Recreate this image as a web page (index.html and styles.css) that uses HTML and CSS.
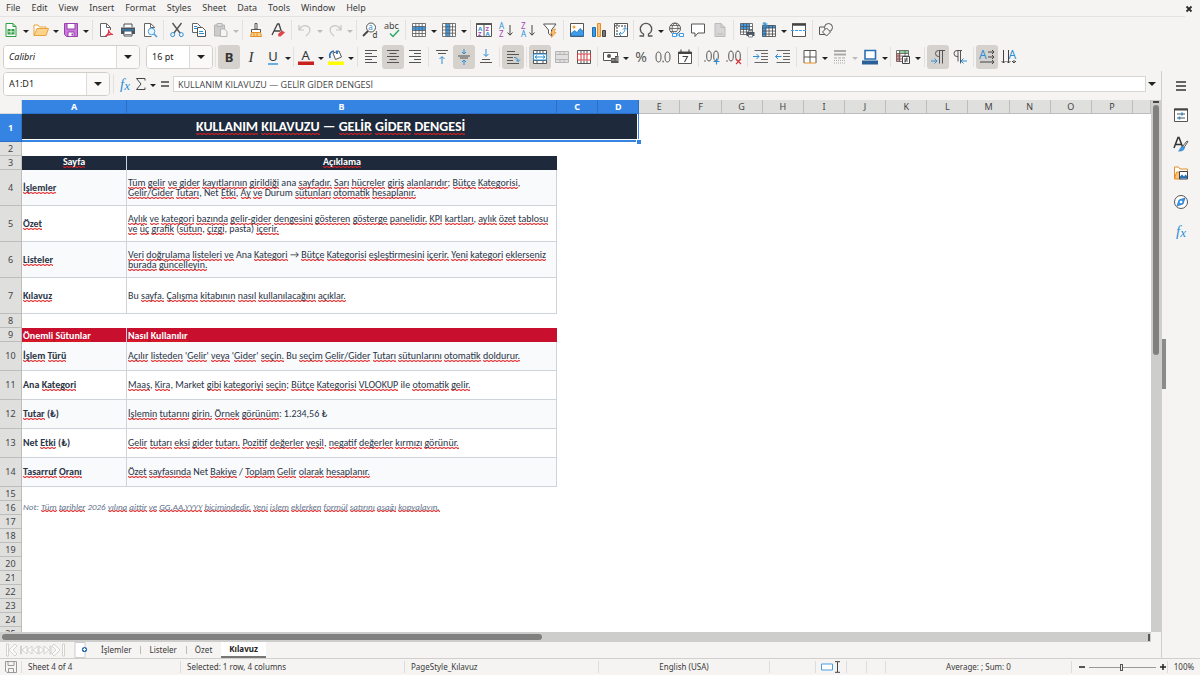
FILE: index.html
```html
<!DOCTYPE html>
<html lang="tr">
<head>
<meta charset="utf-8">
<title>Kılavuz</title>
<link rel="stylesheet" href="styles.css">
</head>
<body>
<div class="app">
<header class="menubar">
<nav class="menus">
<button>File</button><button>Edit</button><button>View</button><button>Insert</button><button>Format</button><button>Styles</button><button>Sheet</button><button>Data</button><button>Tools</button><button>Window</button><button>Help</button>
</nav>
<button class="close" aria-label="Close"><svg width="8" height="8" viewBox="0 0 8 8"><path d="M1.5 1.5l5 5M6.5 1.5l-5 5" stroke="#2b2b2b" stroke-width="1.8"/></svg></button>
</header>

<div class="toolbar standard">
<button class="tb" aria-label="New"><svg class="ic" viewBox="0 0 16 16"><path d="M3 1.5h7l3 3v10H3z" fill="#fff" stroke="#2f9e44"/><path d="M10 1.5v3h3" fill="none" stroke="#2f9e44"/><path d="M4.500 7h7v5.500h-7z" fill="#2f9e44"/><path d="M5 9.800h6M8 7v5" stroke="#fff" stroke-width=".8"/></svg></button><button class="dd" aria-label="New menu"></button>
<button class="tb" aria-label="Open"><svg class="ic" viewBox="0 0 16 16"><path d="M1 13.500V3h4l1.500 2h6.500v2" fill="#fff" stroke="#e8a33d"/><path d="M1 13.500L4 6.500h11.500l-2.500 7z" fill="#fbd38d" stroke="#e8a33d"/></svg></button><button class="dd" aria-label="Open menu"></button>
<button class="tb" aria-label="Save"><svg class="ic" viewBox="0 0 16 16"><path d="M1.500 1.500h13v13h-11l-2-2z" fill="#c77ad6" stroke="#9b3fb0"/><path d="M4 1.500h8v5.500H4zM5 10h6v4.500H5z" fill="#fff" stroke="#9b3fb0"/><path d="M8.500 11.500h1.500v2H8.500z" fill="#9b3fb0"/></svg></button><button class="dd" aria-label="Save menu"></button>
<i class="sep"></i>
<button class="tb" aria-label="Export as PDF"><svg class="ic" viewBox="0 0 16 16"><path d="M9 14.500H2.500v-13h6l4 4V8" fill="#fff" stroke="#666"/><path d="M8.500 1.500v4h4" fill="none" stroke="#666"/><path d="M7.500 14c3-1.500 3.500-4 3-6.500 .5 3 2 4.500 4.500 5-3-.5-5 0-7.500 1.500z" fill="none" stroke="#dc3545" stroke-width="1.200"/></svg></button>
<button class="tb" aria-label="Print"><svg class="ic" viewBox="0 0 16 16"><path d="M4 5V2h8v3" fill="#fff" stroke="#4a4f55"/><path d="M1 5.500h14v6.500H1z" fill="#4a5560"/><path d="M4 9h8v5H4z" fill="#fff" stroke="#4a4f55"/><path d="M2 8h12" stroke="#2a8fd6"/><path d="M5 12.500h6" stroke="#888"/></svg></button>
<button class="tb" aria-label="Print preview"><svg class="ic" viewBox="0 0 16 16"><path d="M12.500 6V5l-4-3.500h-6v13h7" fill="#fff" stroke="#666"/><path d="M8.500 1.500v4h4" fill="none" stroke="#666"/><circle cx="9.500" cy="9.500" r="3.300" fill="#e8f4fd" stroke="#4a9fe0"/><path d="M12 12l3 3" stroke="#4a9fe0" stroke-width="1.600"/></svg></button>
<i class="sep"></i>
<button class="tb" aria-label="Cut"><svg class="ic" viewBox="0 0 16 16"><path d="M3.500 1l7.500 10M12.500 1L5 11" stroke="#555" stroke-width="1.400"/><circle cx="3.700" cy="12.600" r="2" fill="none" stroke="#2a8fd6"/><circle cx="12.300" cy="12.600" r="2" fill="none" stroke="#2a8fd6"/></svg></button>
<button class="tb" aria-label="Copy"><svg class="ic" viewBox="0 0 16 16"><path d="M1.500 1.500h5l3 3v6h-8z" fill="#fff" stroke="#666"/><path d="M6.500 5.500h5l3 3v6h-8z" fill="#fff" stroke="#555"/><path d="M3 4.500h3M3 6.500h3M8 9.500h4M8 11.500h5" stroke="#2a8fd6"/></svg></button>
<button class="tb" aria-label="Paste" disabled><svg class="ic" viewBox="0 0 16 16"><path d="M1.500 3h10v11h-10z" fill="#ccc" stroke="#b5b5b5"/><path d="M4 1.500h5v3H4z" fill="#ddd" stroke="#b5b5b5"/><path d="M7.500 7h4l2.500 2.500v5H7.500z" fill="#f4f4f4" stroke="#b5b5b5"/></svg></button><button class="dd" aria-label="Paste menu" disabled></button>
<i class="sep"></i>
<button class="tb" aria-label="Clone formatting"><svg class="ic" viewBox="0 0 16 16"><path d="M7 1.500h2V7H7zM3.500 7.500h9v3h-9z" fill="#fff" stroke="#555"/><path d="M3.500 10.500h9l1 4h-11z" fill="#fbd38d" stroke="#e58e26"/><path d="M6 11v3M9 11v3" stroke="#e58e26"/></svg></button>
<button class="tb" aria-label="Clear formatting"><svg class="ic" viewBox="0 0 16 16"><path d="M2 13L7.500 2H9l2.500 8M4 9h6" fill="none" stroke="#444" stroke-width="1.300"/><path d="M8 12l4-3.500 3 2-4.500 4H8.500z" fill="#e0474c"/></svg></button>
<i class="sep"></i>
<button class="tb" aria-label="Undo" disabled><svg class="ic" viewBox="0 0 16 16"><path d="M2 3v5h5M2 8c2-4 6-5.500 9-3.500s3 5.500-2 9.500" fill="none" stroke="#c4c4c4" stroke-width="1.200"/></svg></button><button class="dd" aria-label="Undo menu" disabled></button>
<button class="tb" aria-label="Redo" disabled><svg class="ic" viewBox="0 0 16 16"><path d="M14 3v5H9M14 8c-2-4-6-5.500-9-3.500S2 10 7 14" fill="none" stroke="#c4c4c4" stroke-width="1.200"/></svg></button><button class="dd" aria-label="Redo menu" disabled></button>
<i class="sep"></i>
<button class="tb" aria-label="Find and replace"><svg class="ic" viewBox="0 0 16 16"><circle cx="9" cy="5.500" r="4.500" fill="#fff" stroke="#555"/><path d="M6 9l-5 5" stroke="#444" stroke-width="1.800"/><text x="6.300" y="8" font-size="8" fill="#2a8fd6">a</text><text x="10.500" y="15.500" font-size="8" fill="#333">d</text></svg></button>
<button class="tb" aria-label="Spelling"><svg class="ic" viewBox="0 0 16 16"><text x="0" y="7" font-size="9" fill="#444">abc</text><path d="M6 11.500l3 3 6-6.500" fill="none" stroke="#2fa866" stroke-width="1.500"/></svg></button>
<i class="sep"></i>
<button class="tb" aria-label="Row"><svg class="ic" viewBox="0 0 16 16"><path d="M1.500 1.500h13v13h-13z" fill="#fff"/><path d="M1.500 4.500h13v4h-13z" fill="#3d9be9"/><path d="M1.500 1.500h13v13h-13zM1.500 4.500h13M1.500 8.500h13M1.500 11.500h13M4.800 1.500v13M8 1.500v13M11.200 1.500v13" fill="none" stroke="#555" stroke-width=".8"/></svg></button><button class="dd" aria-label="Row menu"></button>
<button class="tb" aria-label="Column"><svg class="ic" viewBox="0 0 16 16"><path d="M1.500 1.500h13v13h-13z" fill="#fff"/><path d="M4.800 1.500h4v13h-4z" fill="#3d9be9"/><path d="M1.500 1.500h13v13h-13zM4.800 1.500v13M8.800 1.500v13M11.500 1.500v13M1.500 4.800h13M1.500 8h13M1.500 11.200h13" fill="none" stroke="#555" stroke-width=".8"/></svg></button><button class="dd" aria-label="Column menu"></button>
<i class="sep"></i>
<button class="tb" aria-label="Sort"><svg class="ic" viewBox="0 0 16 16"><path d="M.5 1.500h15v13H.5zM8 3v11" fill="#fff" stroke="#555"/><path d="M.5 2h15" stroke="#555" stroke-width="2"/><g font-size="6" font-weight="700"><text x="2" y="8.500" fill="#2a8fd6">A</text><text x="2" y="14" fill="#a347ba">Z</text><text x="9.500" y="8.500" fill="#a347ba">Z</text><text x="9.500" y="14" fill="#2a8fd6">A</text></g></svg></button>
<button class="tb" aria-label="Sort ascending"><svg class="ic" viewBox="0 0 16 16"><g font-size="8"><text x="1" y="6.500" fill="#2a8fd6">A</text><text x="1" y="15" fill="#a347ba">Z</text></g><path d="M12 3v10M9.500 10.500L12 13.200l2.500-2.700" fill="none" stroke="#444"/></svg></button>
<button class="tb" aria-label="Sort descending"><svg class="ic" viewBox="0 0 16 16"><g font-size="8"><text x="1" y="6.500" fill="#a347ba">Z</text><text x="1" y="15" fill="#2a8fd6">A</text></g><path d="M12 3v10M9.500 10.500L12 13.200l2.500-2.700" fill="none" stroke="#444"/></svg></button>
<button class="tb" aria-label="AutoFilter"><svg class="ic" viewBox="0 0 16 16"><path d="M1.500 2h12.500L9.500 8v6L6.500 11.500V8z" fill="#fff" stroke="#555"/><path d="M11.500 7L8.500 11.500h2l-1 4L14 10.500h-2L13.500 7z" fill="#fbc27a" stroke="#e58e26" stroke-width=".7"/></svg></button>
<i class="sep"></i>
<button class="tb" aria-label="Insert image"><svg class="ic" viewBox="0 0 16 16"><path d="M1.500 1.500h13v13h-13z" fill="#fff" stroke="#555"/><path d="M2 14v-2.500l3.500-3 2.500 2 3-4 3.500 3V14z" fill="#3d9be9" stroke="#1c6fb5" stroke-width=".7"/><circle cx="5" cy="5" r="1.500" fill="#f3a53c"/></svg></button>
<button class="tb" aria-label="Insert chart"><svg class="ic" viewBox="0 0 16 16"><path d="M1.500 5.500h3v9h-3z" fill="#3d9be9" stroke="#1c6fb5"/><path d="M6.500 1.500h3v13h-3z" fill="#fbc27a" stroke="#e58e26"/><path d="M11.500 8.500h3v6h-3z" fill="#777" stroke="#444"/></svg></button>
<button class="tb" aria-label="Pivot table"><svg class="ic" viewBox="0 0 16 16"><path d="M1.500 1.500h13v13h-13z" fill="#fff" stroke="#555"/><path d="M4 2v12M2 4h12" stroke="#777" stroke-width="1.500" stroke-dasharray="2 1"/><path d="M6 12c4 0 6-2 6-6M10 7.500L12 5.500l2 2M8 10l-2 2 2 2" fill="none" stroke="#2a8fd6"/></svg></button>
<i class="sep tight"></i>
<button class="tb" aria-label="Special character"><svg class="ic" viewBox="0 0 16 16"><path d="M1.500 14h4v-2C3.500 11 2.300 9 2.300 7a5.700 5.700 0 0 1 11.400 0c0 2-1.200 4-3.200 5v2h4" fill="none" stroke="#555" stroke-width="1.300"/></svg></button><button class="dd" aria-label="Special character menu"></button>
<button class="tb" aria-label="Hyperlink"><svg class="ic" viewBox="0 0 16 16"><circle cx="7" cy="6.500" r="5.500" fill="none" stroke="#555"/><path d="M1.500 6.500h11M2.500 3.500h9M2.500 9.500h6M7 1c-4 3-4 8 0 11M7 1c4 3 4 8 0 9" fill="none" stroke="#555" stroke-width=".8"/><path d="M4.500 11.500h4v3h-4zM11.500 11.500h4v3h-4zM8 13h4" fill="#fff" stroke="#3d9be9"/></svg></button>
<button class="tb" aria-label="Comment"><svg class="ic" viewBox="0 0 16 16"><path d="M1.500 2h13v9H8l-3 3.500V11H1.500z" fill="#fff" stroke="#555"/></svg></button>
<button class="tb" aria-label="Headers and footers" disabled><svg class="ic" viewBox="0 0 16 16"><path d="M3 1.500h6l4 4v9H3z" fill="#d6d6d6" stroke="#bbb"/><path d="M9 1.500v4h4M5 12h6" fill="none" stroke="#bbb"/></svg></button>
<i class="sep"></i>
<button class="tb" aria-label="Print area"><svg class="ic" viewBox="0 0 16 16"><path d="M1.500 1.500h12v11h-12z" fill="#fff"/><path d="M1.500 1.500h9v6h-9z" fill="#3d9be9"/><path d="M1.500 1.500h12v11h-12zM1.500 4.500h12M1.500 7.500h12M1.500 10h12M4.500 1.500v11M7.500 1.500v11M10.500 1.500v11" fill="none" stroke="#555" stroke-width=".8"/><path d="M7.500 10h8v4h-8z" fill="#4a5560"/><path d="M9.500 8.500h4v1.500h-4zM9.500 12.500h4v2.500h-4z" fill="#fff" stroke="#4a5560" stroke-width=".7"/></svg></button>
<button class="tb" aria-label="Freeze"><svg class="ic" viewBox="0 0 16 16"><path d="M1.500 3.500h13v11h-13z" fill="#fff"/><path d="M1.500 3.500h13v2.500h-13zM1.500 3.500h3.500v11H1.500z" fill="#3d9be9"/><path d="M1.500 3.500h13v11h-13zM1.500 6h13M1.500 9h13M1.500 12h13M5 3.500v11M8 3.500v11M11.500 3.500v11" fill="none" stroke="#444" stroke-width=".8"/><path d="M4 0v6M1.500 2h5M2 .500l4 3.500" stroke="#2a8fd6"/></svg></button><button class="dd" aria-label="Freeze menu"></button>
<button class="tb" aria-label="Split window"><svg class="ic" viewBox="0 0 16 16"><path d="M1.500 2h13v12.500h-13z" fill="#fff" stroke="#555"/><path d="M1 2.500h14" stroke="#444" stroke-width="2.500"/><path d="M0 8.500h16" stroke="#3d9be9" stroke-dasharray="3 1"/></svg></button>
<i class="sep"></i>
<button class="tb" aria-label="Draw functions"><svg class="ic" viewBox="0 0 16 16"><path d="M1.500 5h8v7.500h-8z" fill="#f5f4f2" stroke="#555"/><circle cx="10.500" cy="5.500" r="4" fill="#f5f4f2" stroke="#555"/><path d="M8.500 6l4 4-4 4-4-4z" fill="#f5f4f2" stroke="#555"/></svg></button>
</div>

<div class="toolbar formatting">
<div class="combo font"><select aria-label="Font name"><option>Calibri</option></select><span class="drop"></span></div>
<div class="combo size"><select aria-label="Font size"><option>16 pt</option></select><span class="drop"></span></div>
<i class="sep"></i>
<button class="tb on" aria-label="Bold"><b class="glyph">B</b></button>
<button class="tb" aria-label="Italic"><em class="glyph serif">I</em></button>
<button class="tb" aria-label="Underline"><span class="glyph under">U</span></button><button class="dd" aria-label="Underline menu"></button>
<i class="sep tight"></i>
<button class="tb" aria-label="Font color"><svg class="ic" viewBox="0 0 16 16"><text x="3.500" y="11" font-size="13" fill="#333">A</text><path d="M0 12.500h16v3.500H0z" fill="#c9211e"/></svg></button><button class="dd" aria-label="Font color menu"></button>
<button class="tb" aria-label="Highlighting"><svg class="ic" viewBox="0 0 16 16"><path d="M5 4l6-2 2.500 6-6 2.500z" fill="#fff" stroke="#555"/><path d="M9 5V1.500M2 9c-1-4 0-6 4-7" fill="none" stroke="#2a6fb5" stroke-width="1.800"/><path d="M0 12.500h16v3.500H0z" fill="#ff0"/></svg></button><button class="dd" aria-label="Highlighting menu"></button>
<i class="sep"></i>
<button class="tb" aria-label="Align left"><svg class="ic" viewBox="0 0 16 16"><path d="M2 1.500h12M2 4.500h7M2 7.500h12M2 10.500h7M2 13.500h12" stroke="#555"/></svg></button>
<button class="tb on" aria-label="Align center"><svg class="ic" viewBox="0 0 16 16"><path d="M2 1.500h12M4.500 4.500h7M2 7.500h12M4.500 10.500h7M2 13.500h12" stroke="#555"/></svg></button>
<button class="tb" aria-label="Align right"><svg class="ic" viewBox="0 0 16 16"><path d="M2 1.500h12M7 4.500h7M2 7.500h12M7 10.500h7M2 13.500h12" stroke="#555"/></svg></button>
<i class="sep"></i>
<button class="tb" aria-label="Align top"><svg class="ic" viewBox="0 0 16 16"><path d="M2 1.500h12M4 4.500h8" stroke="#555"/><path d="M8 15V8M5.500 10L8 7.500l2.500 2.500" fill="none" stroke="#2a8fd6"/></svg></button>
<button class="tb on" aria-label="Center vertically"><svg class="ic" viewBox="0 0 16 16"><path d="M2 7h12M4 9h8" stroke="#555"/><path d="M8 0v5M6 3l2 2 2-2M8 16v-5M6 13l2-2 2 2" fill="none" stroke="#2a8fd6"/></svg></button>
<button class="tb" aria-label="Align bottom"><svg class="ic" viewBox="0 0 16 16"><path d="M4 10.500h8M2 13.500h12" stroke="#555"/><path d="M8 0v7M5.500 5L8 7.500 10.500 5" fill="none" stroke="#2a8fd6"/></svg></button>
<i class="sep"></i>
<button class="tb on" aria-label="Wrap text"><svg class="ic" viewBox="0 0 16 16"><path d="M2 2.500h8M2 5.500h12M2 8.500h6M2 11.500h6M2 14.500h12" stroke="#555"/><path d="M9 8.500c3 0 4 1 4 4M11 10.500l2 2 2-2" fill="none" stroke="#2a8fd6"/></svg></button>
<i class="sep"></i>
<button class="tb on" aria-label="Merge and center"><svg class="ic" viewBox="0 0 16 16"><path d="M1.500 1.500h13v13h-13zM1.500 4.500h13M1.500 11.500h13M5 1.500v3M11 1.500v3M8 1.500v3M5 11.500v3M11 11.500v3" fill="#fff" stroke="#555"/><path d="M1.500 5h13v6h-13z" fill="#fff" stroke="#2a8fd6"/><path d="M3 8h10M5 6.500L3 8l2 1.500M11 6.500L13 8l-2 1.500" fill="none" stroke="#2a8fd6"/></svg></button>
<button class="tb" aria-label="Merge cells" disabled><svg class="ic" viewBox="0 0 16 16"><path d="M1.500 2.500h13v11h-13zM1.500 5.500h13M1.500 10.500h13M6 2.500v3M10 2.500v3M6 10.500v3M10 10.500v3" fill="#e0e0e0" stroke="#b5b5b5"/></svg></button>
<button class="tb" aria-label="Unmerge cells"><svg class="ic" viewBox="0 0 16 16"><path d="M1.500 1.500h13v13h-13zM5 1.500v3M8 1.500v3M11 1.500v3M5 11.500v3M8 11.500v3M11 11.500v3" fill="#fff" stroke="#555"/><path d="M1.500 5h13v6h-13zM5 5v6M8 5v6M11 5v6" fill="#fff" stroke="#d83a3f"/></svg></button>
<i class="sep"></i>
<button class="tb" aria-label="Currency"><svg class="ic" viewBox="0 0 16 16"><path d="M.5 3.500h14v8H.5z" fill="#fff" stroke="#555"/><circle cx="6" cy="7" r="2" fill="#555"/><path d="M8 9h4v5H8zM12 7h3.500v7H12z" fill="#555"/><path d="M8.500 11h3M12.500 9h3M12.500 11h3" stroke="#eee" stroke-width=".7"/></svg></button><button class="dd" aria-label="Currency menu"></button>
<button class="tb" aria-label="Percent"><span class="glyph light">%</span></button>
<button class="tb" aria-label="Number"><svg class="ic" viewBox="0 0 16 16"><path d="M7.500 12.500h1.200" stroke="#444" stroke-width="1.300"/><ellipse cx="3.500" cy="8" rx="2.500" ry="5" fill="none" stroke="#555"/><ellipse cx="12.500" cy="8" rx="2.500" ry="5" fill="none" stroke="#555"/></svg></button>
<button class="tb" aria-label="Date"><svg class="ic" viewBox="0 0 16 16"><path d="M1.500 3h13v11.500h-13z" fill="#fff" stroke="#555"/><path d="M1 4h14" stroke="#444" stroke-width="2"/><path d="M4 .5v3M12 .5v3M5.500 7.500h5L7.500 13" fill="none" stroke="#444" stroke-width="1.100"/></svg></button>
<i class="sep"></i>
<button class="tb" aria-label="Add decimal place"><svg class="ic" viewBox="0 0 16 16"><path d="M.5 12h1" stroke="#444" stroke-width="1.500"/><ellipse cx="5" cy="7" rx="2.300" ry="5" fill="none" stroke="#555"/><ellipse cx="12" cy="7" rx="2.300" ry="5" fill="none" stroke="#555"/><path d="M9.500 12.500h6M12.500 9.500v6" stroke="#2a8fd6" stroke-width="1.200"/></svg></button>
<button class="tb" aria-label="Delete decimal place"><svg class="ic" viewBox="0 0 16 16"><path d="M.5 12h1" stroke="#444" stroke-width="1.500"/><ellipse cx="5" cy="7" rx="2.300" ry="5" fill="none" stroke="#555"/><ellipse cx="12" cy="7" rx="2.300" ry="5" fill="none" stroke="#555"/><path d="M10 10l5 5M15 10l-5 5" stroke="#d83a3f" stroke-width="1.200"/></svg></button>
<i class="sep"></i>
<button class="tb" aria-label="Increase indent"><svg class="ic" viewBox="0 0 16 16"><path d="M1.500 1.500H15M8 4.500h7M8 7.500h7M8 10.500h7M1.500 13.500H15" stroke="#666"/><path d="M0 7.500h6M3.500 5L6 7.500 3.500 10" fill="none" stroke="#2a8fd6"/></svg></button>
<button class="tb" aria-label="Decrease indent"><svg class="ic" viewBox="0 0 16 16"><path d="M1.500 1.500H15M8 4.500h7M8 7.500h7M8 10.500h7M1.500 13.500H15" stroke="#666"/><path d="M.5 7.500h6M3 5L.5 7.500 3 10" fill="none" stroke="#2a8fd6"/></svg></button>
<i class="sep"></i>
<button class="tb" aria-label="Borders"><svg class="ic" viewBox="0 0 16 16"><path d="M2 14V1.500h12V14M8 2v12M2 8h12" fill="#fff" stroke="#555"/><path d="M2 14h12" stroke="#e58e26"/></svg></button><button class="dd" aria-label="Borders menu"></button>
<button class="tb" aria-label="Border style" disabled><svg class="ic" viewBox="0 0 16 16"><path d="M2 2h12M2 5.500h12" stroke="#aaa" stroke-width="2"/><path d="M2 9h12" stroke="#aaa" stroke-dasharray="3 1"/><path d="M2 11.500h12M2 14h12" stroke="#aaa" stroke-dasharray="1 1"/></svg></button><button class="dd" aria-label="Border style menu" disabled></button>
<button class="tb" aria-label="Border color"><svg class="ic" viewBox="0 0 16 16"><path d="M3 1.500h10.500V10H3z" fill="#fff" stroke="#2a6fb5" stroke-width="1.600"/><path d="M0 11.500h16v4H0z" fill="#2a6099"/></svg></button><button class="dd" aria-label="Border color menu"></button>
<i class="sep tight"></i>
<button class="tb" aria-label="Conditional formatting"><svg class="ic" viewBox="0 0 16 16"><path d="M1.500 1.500h12v11h-12z" fill="#fff"/><path d="M4.500 1.500h9v3h-9z" fill="#8fd19e"/><path d="M1.500 4.500h4v8h-4z" fill="#ef8b8b"/><path d="M1.500 1.500h12v11h-12zM1.500 4.500h12M1.500 7h12M1.500 10h12M4.500 1.500v11M10 1.500v6" fill="none" stroke="#555" stroke-width=".8"/><path d="M7.500 7.500h7v7h-7z" fill="#fff" stroke="#444"/><path d="M9 10h4M9 12h4M12 8.500l-2 5" stroke="#333" stroke-width=".8"/></svg></button><button class="dd" aria-label="Conditional formatting menu"></button>
<i class="sep"></i>
<button class="tb on" aria-label="Left to right"><svg class="ic" viewBox="0 0 16 16"><path d="M15 1.500H8.500a3 3 0 0 0 0 6H9M9.500 1.500v13M12.500 1.500v13" fill="none" stroke="#555"/><path d="M1 12h6M4.500 9.500L7 12l-2.500 2.500" fill="none" stroke="#2a8fd6"/></svg></button>
<button class="tb" aria-label="Right to left"><svg class="ic" viewBox="0 0 16 16"><path d="M10 1.500H5a3 3 0 0 0 0 6h1M6 1.500v11M8.500 1.500v13" fill="none" stroke="#555"/><path d="M15 12H9M11.500 9.500L9 12l2.500 2.500" fill="none" stroke="#2a8fd6"/></svg></button>
<i class="sep"></i>
<button class="tb on" aria-label="Text direction horizontal"><svg class="ic" viewBox="0 0 16 16"><text x="0" y="9.500" font-size="12" fill="#2a8fd6">A</text><path d="M9 3h6M13 1l2 2-2 2M9 8h6M13 6l2 2-2 2M1 13h14M13 11l2 2-2 2" fill="none" stroke="#444"/></svg></button>
<button class="tb" aria-label="Text direction vertical"><svg class="ic" viewBox="0 0 16 16"><text x="7.500" y="9.500" font-size="12" fill="#2a8fd6">A</text><path d="M2.500 1v13M.5 12l2 2 2-2M7.500 1v13M5.500 12l2 2 2-2M13 11v3M11 12l2 2 2-2" fill="none" stroke="#444"/></svg></button>
</div>

<div class="workspace">
<main class="doc">
<div class="formulabar">
<div class="combo name"><input aria-label="Name box" value="A1:D1"><span class="drop"></span></div>
<i class="sep"></i>
<button class="fb fx" aria-label="Function wizard">f<small>x</small></button>
<button class="fb" aria-label="Sum"><svg width="12" height="14" viewBox="0 0 12 14"><path d="M10 3.500V1.500H1.500L6 7l-4.500 5.500H10v-2" fill="none" stroke="#444"/></svg></button><button class="dd" aria-label="Sum menu"></button>
<button class="fb" aria-label="Formula"><svg width="10" height="8" viewBox="0 0 10 8"><path d="M1 2h8M1 6h8" stroke="#444" stroke-width="1.600"/></svg></button>
<input class="formula" aria-label="Formula" value="KULLANIM KILAVUZU — GELİR GİDER DENGESİ">
<button class="expand" aria-label="Expand formula bar"></button>
</div>
<div class="gridwrap">
<div class="gridview">
<table>
<colgroup><col class="c-num"><col class="c-a"><col class="c-b"><col span="14"><col class="c-q"></colgroup>
<thead><tr><th class="corner"></th><th class="sel">A</th><th class="sel">B</th><th class="sel">C</th><th class="sel">D</th><th>E</th><th>F</th><th>G</th><th>H</th><th>I</th><th>J</th><th>K</th><th>L</th><th>M</th><th>N</th><th>O</th><th>P</th><th></th></tr></thead>
<tbody>
<tr class="r-title"><th class="sel">1</th><td class="title" colspan="4"><u>KULLANIM</u> <u>KILAVUZU</u> — <u>GELİR</u> <u>GİDER</u> <u>DENGESİ</u><span class="handle"></span></td><td colspan="13"></td></tr>
<tr><th>2</th><td colspan="17"></td></tr>
<tr class="navy"><th>3</th><td><u>Sayfa</u></td><td><u>Açıklama</u></td><td colspan="15"></td></tr>
<tr class="tall tint"><th>4</th><td><u>İşlemler</u></td><td><u>Tüm</u> <u>gelir</u> <u>ve</u> <u>gider</u> <u>kayıtlarının</u> <u>girildiği</u> ana <u>sayfadır.</u> <u>Sarı</u> <u>hücreler</u> <u>giriş</u> <u>alanlarıdır</u>; <u>Bütçe</u> <u>Kategorisi</u>,<br><u>Gelir/Gider</u> <u>Tutarı</u>, Net <u>Etki</u>, <u>Ay</u> <u>ve</u> Durum <u>sütunları</u> <u>otomatik</u> <u>hesaplanır.</u></td><td colspan="15"></td></tr>
<tr class="tall"><th>5</th><td><u>Özet</u></td><td><u>Aylık</u> <u>ve</u> <u>kategori</u> <u>bazında</u> <u>gelir-gider</u> <u>dengesini</u> <u>gösteren</u> <u>gösterge</u> <u>panelidir.</u> <u>KPI</u> <u>kartları</u>, <u>aylık</u> <u>özet</u> <u>tablosu</u><br><u>ve</u> <u>üç</u> <u>grafik</u> (<u>sütun</u>, <u>çizgi</u>, pasta) <u>içerir.</u></td><td colspan="15"></td></tr>
<tr class="tall tint"><th>6</th><td><u>Listeler</u></td><td><u>Veri</u> <u>doğrulama</u> <u>listeleri</u> <u>ve</u> Ana <u>Kategori</u> → <u>Bütçe</u> <u>Kategorisi</u> <u>eşleştirmesini</u> <u>içerir.</u> <u>Yeni</u> <u>kategori</u> <u>eklerseniz</u><br><u>burada</u> <u>güncelleyin.</u></td><td colspan="15"></td></tr>
<tr class="tall"><th>7</th><td><u>Kılavuz</u></td><td>Bu <u>sayfa.</u> <u>Çalışma</u> <u>kitabının</u> <u>nasıl</u> <u>kullanılacağını</u> <u>açıklar.</u></td><td colspan="15"></td></tr>
<tr><th>8</th><td colspan="17"></td></tr>
<tr class="red"><th>9</th><td><u>Önemli</u> <u>Sütunlar</u></td><td><u>Nasıl</u> <u>Kullanılır</u></td><td colspan="15"></td></tr>
<tr class="mid tint"><th>10</th><td><u>İşlem</u> <u>Türü</u></td><td><u>Açılır</u> <u>listeden</u> '<u>Gelir</u>' <u>veya</u> '<u>Gider</u>' <u>seçin.</u> Bu <u>seçim</u> <u>Gelir/Gider</u> <u>Tutarı</u> <u>sütunlarını</u> <u>otomatik</u> <u>doldurur.</u></td><td colspan="15"></td></tr>
<tr class="mid"><th>11</th><td>Ana <u>Kategori</u></td><td><u>Maaş</u>, <u>Kira</u>, Market <u>gibi</u> <u>kategoriyi</u> <u>seçin</u>; <u>Bütçe</u> <u>Kategorisi</u> <u>VLOOKUP</u> ile <u>otomatik</u> <u>gelir.</u></td><td colspan="15"></td></tr>
<tr class="mid tint"><th>12</th><td><u>Tutar</u> (₺)</td><td><u>İşlemin</u> <u>tutarını</u> <u>girin.</u> <u>Örnek</u> <u>görünüm</u>: 1.234,56 ₺</td><td colspan="15"></td></tr>
<tr class="mid"><th>13</th><td>Net <u>Etki</u> (₺)</td><td><u>Gelir</u> <u>tutarı</u> <u>eksi</u> <u>gider</u> <u>tutarı.</u> <u>Pozitif</u> <u>değerler</u> <u>yeşil</u>, <u>negatif</u> <u>değerler</u> <u>kırmızı</u> <u>görünür.</u></td><td colspan="15"></td></tr>
<tr class="mid tint"><th>14</th><td><u>Tasarruf</u> <u>Oranı</u></td><td><u>Özet</u> <u>sayfasında</u> Net <u>Bakiye</u> / <u>Toplam</u> <u>Gelir</u> <u>olarak</u> <u>hesaplanır.</u></td><td colspan="15"></td></tr>
<tr><th>15</th><td colspan="17"></td></tr>
<tr><th>16</th><td class="note" colspan="17">Not: <u>Tüm</u> <u>tarihler</u> 2026 <u>yılına</u> <u>aittir</u> <u>ve</u> <u>GG.AA.YYYY</u> <u>biçimindedir.</u> <u>Yeni</u> <u>işlem</u> <u>eklerken</u> <u>formül</u> <u>satırını</u> <u>aşağı</u> <u>kopyalayın.</u></td></tr>
<tr><th>17</th><td colspan="17"></td></tr>
<tr><th>18</th><td colspan="17"></td></tr>
<tr><th>19</th><td colspan="17"></td></tr>
<tr><th>20</th><td colspan="17"></td></tr>
<tr><th>21</th><td colspan="17"></td></tr>
<tr><th>22</th><td colspan="17"></td></tr>
<tr><th>23</th><td colspan="17"></td></tr>
<tr><th>24</th><td colspan="17"></td></tr>
<tr><th>25</th><td colspan="17"></td></tr>
</tbody>
</table>
</div>
<div class="vscroll"><span class="splitter"></span><span class="thumb"></span></div>
</div>
<div class="hscroll"><span class="thumb"></span><span class="splitter"></span></div>
<div class="tabs">
<div class="tabnav" aria-hidden="true"><svg width="62" height="14" viewBox="0 0 62 14"><g fill="#fbfbfa" stroke="#c9c9c7" stroke-width=".8"><path d="M1.500 1v12h2V1zM4 7l6-6 2 2-4 4 4 4-2 2zM15.500 3v8h1V3zM17 7l5-4v8zM22 7l5-4v8zM28 7l5-4v8zM34 3l5 4-5 4zM39 3l5 4-5 4zM45 3v8h1V3zM47 3l2-2 6 6-6 6-2-2 4-4zM57.500 1v12h2V1z"/></g></svg></div>
<button class="addtab" aria-label="Add sheet"><svg width="16" height="16" viewBox="0 0 16 16"><path d="M-1 .500h10v15H-1z" fill="#fff" stroke="#ccc"/><circle cx="8.500" cy="7.500" r="2.600" fill="#2a6fb5"/><path d="M7 7.500h3M8.500 6v3" stroke="#fff"/></svg></button>
<button class="tab">İşlemler</button><button class="tab">Listeler</button><button class="tab">Özet</button><button class="tab active">Kılavuz</button>
</div>
</main>
<aside class="sidebar">
<span class="grip"></span>
<button aria-label="Sidebar settings"><svg class="ic" viewBox="0 0 16 16"><path d="M3 4h10M3 8h10M3 12h10" stroke="#333" stroke-width="1.500"/></svg></button>
<button aria-label="Properties"><svg class="ic" viewBox="0 0 16 16"><path d="M1.500 2h13v12.500h-13z" fill="#fff" stroke="#555"/><path d="M1 2.500h14" stroke="#444" stroke-width="2"/><path d="M4 7h8M4 11h8" stroke="#555"/><path d="M9 5.500v3M6.500 9.500v3" stroke="#2a8fd6" stroke-width="1.600"/></svg></button>
<button aria-label="Styles"><svg class="ic" viewBox="0 0 16 16"><path d="M1 12L5 1.500h1L10 12M2.500 8.500h6" fill="none" stroke="#333" stroke-width="1.500"/><path d="M15 5.500l-4 6-1.500-1L14 5z" fill="#fff" stroke="#555"/><path d="M9.500 10.500l2 1c0 2-2 4-6 3.500 2-1 1.500-4 4-4.500z" fill="#3d9be9" stroke="#1c6fb5" stroke-width=".6"/></svg></button>
<button aria-label="Gallery"><svg class="ic" viewBox="0 0 16 16"><path d="M1.500 14V2h4L7 4h7.500v3" fill="#fff" stroke="#e58e26"/><path d="M1.500 14L3.500 7H8v7z" fill="#fbc27a" stroke="#e58e26"/><path d="M6.500 6.500h8v7.500h-8z" fill="#fff" stroke="#444"/><path d="M7 13.500v-2l2-2 2 2 1.500-2 1.500 1.500v2.500z" fill="#2a6fb5"/></svg></button>
<button aria-label="Navigator"><svg class="ic" viewBox="0 0 16 16"><circle cx="8" cy="8" r="6.500" fill="#fff" stroke="#555"/><path d="M12 4l-2 6-6 2 2-6z" fill="#3d9be9" stroke="#1c6fb5" stroke-width=".7"/><circle cx="8" cy="8" r="1.300" fill="#fff"/></svg></button>
<button class="fx" aria-label="Functions">f<small>x</small></button>
</aside>
</div>

<footer class="status">
<div class="mid-cell"><svg width="12" height="12" viewBox="0 0 12 12"><path d="M.5 .5h11v11h-9.500l-1.500-1.500zM3 .5v4h6v-4M3.500 11.500v-4h5v4" fill="none" stroke="#999"/></svg></div>
<div>Sheet 4 of 4</div>
<div>Selected: 1 row, 4 columns</div>
<div>PageStyle_Kılavuz</div>
<div class="mid-cell">English (USA)</div>
<div></div>
<div class="mid-cell"><svg width="22" height="12" viewBox="0 0 22 12"><path d="M1.500 3h11v6h-11z" fill="#fff" stroke="#4a9fe0"/><path d="M15 .7h5M15 11.300h5M17.500 1v10" stroke="#444"/></svg></div>
<div></div>
<div></div>
<div class="mid-cell">Average: ; Sum: 0</div>
<div class="zoom"><button aria-label="Zoom out"><svg width="8" height="8" viewBox="0 0 8 8"><path d="M1 4h6" stroke="#222" stroke-width="1.500"/></svg></button><input type="range" aria-label="Zoom" min="0" max="100" value="48"><button aria-label="Zoom in"><svg width="8" height="8" viewBox="0 0 8 8"><path d="M1 4h6M4 1v6" stroke="#222" stroke-width="1.500"/></svg></button></div>
<div class="mid-cell last">100%</div>
</footer>
</div>
</body>
</html>
```
FILE: styles.css
```css
* { box-sizing: border-box; }
body { margin: 0; font-family: "Noto Sans", "Open Sans", sans-serif; font-size: 9px; line-height: 12px; color: #3a3a3a; background: #f5f4f2; }
button, input, select { font: inherit; color: inherit; border: 0; padding: 0; margin: 0; background: none; border-radius: 0; }
.app { display: flex; flex-direction: column; height: 100vh; overflow: hidden; }

.menubar { display: flex; height: 17px; flex: none; padding-right: 7px; }
.menus { display: flex; flex: 1; gap: 11px; padding-left: 6px; border-bottom: 1px solid #e4e3e1; }
.close { width: 8px; display: flex; align-items: center; }

.toolbar { display: flex; align-items: center; flex: none; }
.standard { height: 26px; }
.formatting { height: 28px; padding-left: 3px; }
.tb { width: 22px; height: 24px; flex: none; display: flex; align-items: center; justify-content: center; border-radius: 3px; }
.tb.on { background: #d5d1cd; }
.ic { width: 16px; height: 16px; display: block; overflow: visible; font-family: "Noto Sans", sans-serif; }
.dd { width: 8px; height: 22px; flex: none; display: flex; align-items: center; justify-content: center; }
.dd::after, .drop::after, .expand::after { content: ""; border: 3px solid transparent; border-top-color: #222; border-bottom: 0; margin-top: 2px; }
.dd:disabled::after { border-top-color: #bbb; }
.drop::after, .expand::after { border-width: 4px; border-bottom: 0; margin-top: 0; }
.sep { width: 1px; height: 20px; margin: 0 2px; background: #e2e1df; flex: none; }
.sep.tight { margin: 0 1px; }
.glyph { font-size: 13px; line-height: 18px; color: #333; }
.glyph.serif { font-family: "Liberation Serif", serif; font-size: 15px; }
.glyph.under { line-height: 14px; border-bottom: 2px solid #6aaee6; }
.glyph.light { font-size: 14px; color: #555; }

.combo { display: flex; height: 24px; border: 1px solid #d2cfcb; border-radius: 4px; background: #fff; overflow: hidden; flex: none; }
.combo select, .combo input { appearance: none; flex: 1; min-width: 0; padding-left: 5px; background: #fff; color: #222; }
.combo .drop { width: 23px; flex: none; display: flex; align-items: center; justify-content: center; border-left: 1px solid #dddbd8; background: #faf9f8; }
.combo.font { width: 137px; margin-right: 6px; font-style: italic; }
.combo.size { width: 67px; }
.combo.name { width: 107px; }

.workspace { flex: 1; min-height: 0; display: flex; }
.doc { flex: 1; min-width: 0; display: flex; flex-direction: column; }
.formulabar { height: 28px; flex: none; display: flex; align-items: center; padding: 0 0 2px 3px; }
.formulabar .sep { margin: 0 3px; }
.fb { height: 20px; width: 16px; display: flex; align-items: center; justify-content: center; }
.fx { font-family: "Liberation Serif", serif; font-style: italic; font-size: 15px; color: #2a8fd6; }
.fx small { font-size: 13px; padding-top: 4px; }
.formula { flex: 1; min-width: 0; height: 16px; padding-left: 4px; border: 1px solid #d8d6d3; background: #fff; color: #444; font-family: "Open Sans", sans-serif; }
.expand { width: 12px; height: 16px; margin-right: 3px; display: flex; align-items: center; justify-content: center; }

.gridwrap { flex: 1; min-height: 0; display: flex; margin-top: 1px; }
.gridview { flex: 1; min-width: 0; overflow: hidden; background: #fff; }
table { width: 100%; table-layout: fixed; border-spacing: 0; }
.c-num { width: 22px; }
.c-a { width: 105px; }
.c-b { width: 430px; }
.c-q { width: 18px; }
tr { height: 14px; }
th, td { padding: 0; vertical-align: middle; }
th { font-weight: 400; line-height: 10px; background: #dfdfdd; border-right: 1px solid #bdbdbb; border-bottom: 1px solid #bdbdbb; color: #444; }
th.corner { background: #f5f4f2; border-color: #d8d8d6; }
th.sel { background: #3584e4; border-color: #2a6fc4; color: #fff; font-weight: 700; }
td { font-family: Carlito, Lato, sans-serif; font-size: 10px; line-height: 10px; color: #2b3547; white-space: nowrap; }
u { text-decoration: none; background: url("data:image/svg+xml,%3Csvg xmlns='http://www.w3.org/2000/svg' width='4' height='2' viewBox='0 0 4 2'%3E%3Cpath d='M0 .5L2 1.5L4 .5' fill='none' stroke='%23e02020' stroke-width='1.1'/%3E%3C/svg%3E") left bottom / 4px 2px repeat-x; }
.r-title { height: 28px; }
.title { position: relative; text-align: center; font-size: 14px; font-weight: 700; line-height: 18px; padding-bottom: 2px; color: #fff; background: #1e293b; box-shadow: inset -1px -2px #3584e4, inset -2px -3px #fff; }
.handle { position: absolute; right: -2px; bottom: -2px; width: 5px; height: 5px; background: #3584e4; border: 1px solid #fff; border-width: 1px 0 0 1px; }
.navy td:nth-child(-n+3), .red td:nth-child(-n+3) { color: #fff; font-weight: 700; }
.navy td:nth-child(-n+3) { background: #1e293b; text-align: center; padding-bottom: 2px; }
.red td:nth-child(-n+3) { background: #c8102e; padding: 1px 0 0 1px; }
.navy td:nth-child(2), .red td:nth-child(2) { border-right: 1px solid #cbd5e1; }
.tall { height: 36px; }
.mid { height: 29px; }
.tall td:nth-child(-n+3), .mid td:nth-child(-n+3) { padding-left: 1px; border-right: 1px solid #cfd4da; border-bottom: 1px solid #cfd4da; }
.tint td:nth-child(-n+3) { background: #f8fafc; }
.tall td:nth-child(2), .mid td:nth-child(2) { font-weight: 700; }
td.note { font-style: italic; font-size: 9px; color: #64748b; padding: 0 0 2px 1px; }

.vscroll { width: 10px; flex: none; background: #cdcdcc; display: flex; flex-direction: column; align-items: center; }
.vscroll .splitter { width: 6px; height: 2px; margin: 1px 0 2px; background: #444; }
.vscroll .thumb { width: 6px; height: 47%; border-radius: 3px; background: #7f807f; }
.hscroll { height: 10px; flex: none; margin-right: 10px; background: #cdcdcc; display: flex; align-items: center; justify-content: space-between; padding: 0 1px 0 2px; }
.hscroll .thumb { width: 47%; height: 6px; border-radius: 3px; background: #7f807f; }
.hscroll .splitter { width: 2px; height: 7px; background: #555; }
.tabs { height: 16px; flex: none; display: flex; align-items: stretch; font-size: 8px; }
.tabnav { width: 76px; padding: 1px 0 0 5px; }
.addtab { width: 16px; }
.addtab svg { display: block; overflow: visible; }
.tab { padding: 0 9px; }
.tab + .tab { background: linear-gradient(#bbb, #bbb) left center / 1px 8px no-repeat; }
.tab + .tab.active { background: #fff; font-weight: 700; color: #222; border-bottom: 2px solid #777; padding: 0 8px; }

.sidebar { width: 39px; flex: none; border-left: 1px solid #d0cfcd; display: flex; flex-direction: column; align-items: center; position: relative; }
.sidebar button { width: 24px; height: 29px; display: flex; align-items: center; justify-content: center; }
.grip { position: absolute; left: 0; top: 268px; width: 4px; height: 50px; background: #8b8b8a; }

.status { height: 17px; flex: none; border-top: 1px solid #d0cfcd; display: grid; grid-template-columns: 22px 159fr 224fr 194fr 171fr 46px 31px 20px 19px 186fr 96px 32px; align-items: center; font-size: 8px; }
.status > div { height: 12px; padding-left: 6px; border-right: 1px solid #dedddb; white-space: nowrap; display: flex; align-items: center; }
.status > .mid-cell { justify-content: center; padding: 0; }
.status > .last { border: 0; }
.zoom { gap: 3px; }
.zoom button { width: 8px; height: 8px; display: flex; }
.zoom input { appearance: none; flex: 1; min-width: 0; height: 10px; background: linear-gradient(#999, #999) center / 100% 1px no-repeat; }
.zoom input::-webkit-slider-thumb { appearance: none; width: 3px; height: 7px; background: #eee; border: 1px solid #555; }
```
